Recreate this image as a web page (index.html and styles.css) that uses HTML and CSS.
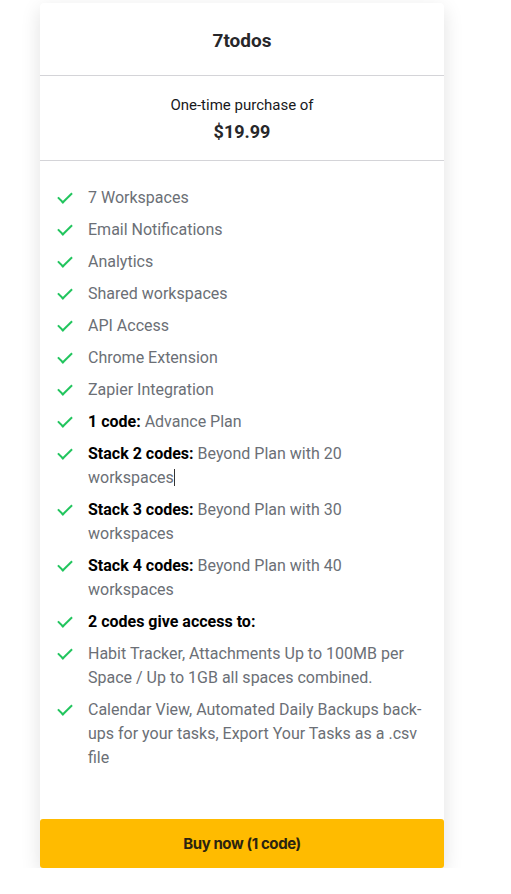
FILE: index.html
```html
<!DOCTYPE html>
<html lang="en">
<head>
  <meta charset="UTF-8" />
  <title>7todos</title>
  <link rel="stylesheet" href="styles.css">
</head>
<body>
  <div class="card">
    <div class="card-head">
      <h2>7todos</h2>
    </div>
    <div class="card-price">
      <p class="price-label">One-time purchase of</p>
      <p class="price">$19.99</p>
    </div>
    <ul class="features">
      <li>7 Workspaces</li>
      <li>Email Notifications</li>
      <li>Analytics</li>
      <li>Shared workspaces</li>
      <li>API Access</li>
      <li>Chrome Extension</li>
      <li>Zapier Integration</li>
      <li><b>1 code:</b> Advance Plan</li>
      <li><b>Stack 2 codes:</b> Beyond Plan with 20 workspaces<span class="caret"></span></li>
      <li><b>Stack 3 codes:</b> Beyond Plan with 30 workspaces</li>
      <li><b>Stack 4 codes:</b> Beyond Plan with 40 workspaces</li>
      <li><b>2 codes give access to:</b></li>
      <li>Habit Tracker, Attachments Up to 100MB per Space / Up to 1GB all spaces combined.</li>
      <li>Calendar View, Automated Daily Backups back-ups for your tasks, Export Your Tasks as a .csv file</li>
    </ul>
    <button class="buy">Buy now (1 code)</button>
  </div>
</body>
</html>
```

FILE: styles.css
```css
body {
  margin: 0;
  padding: 0;
  background: #fff;
  font-family: Roboto, 'Liberation Sans', sans-serif;
}

.card {
  width: 404px;
  margin: 3px 0 0 40px;
  background: #fff;
  box-shadow: 0 6px 20px rgba(0,0,0,0.12);
  border-radius: 4px;
}

.card-head {
  height: 72px;
  display: flex;
  align-items: center;
  justify-content: center;
  border-bottom: 1px solid #d4d4d8;
}

.card-head h2 {
  margin: 2px 0 0;
  font-size: 19px;
  font-weight: 700;
  color: #27272a;
}

.card-price {
  height: 85px;
  border-bottom: 1px solid #d4d4d8;
  text-align: center;
  padding-top: 1px;
  box-sizing: border-box;
}

.price-label {
  margin: 18px 0 0;
  font-size: 15px;
  line-height: 20px;
  color: #18181b;
}

.price {
  margin: 6px 0 0;
  font-size: 18px;
  line-height: 22px;
  font-weight: 700;
  color: #27272a;
}

.features {
  list-style: none;
  margin: 0;
  padding: 25px 14px 49px 48px;
  display: flex;
  flex-direction: column;
  gap: 8px;
}

.features li {
  position: relative;
  font-size: 16px;
  line-height: 24px;
  color: #6b6f76;
}

.features li b {
  color: #000;
  font-weight: 700;
}

.features li::before {
  content: '';
  position: absolute;
  left: -30px;
  top: 6px;
  width: 12px;
  height: 6px;
  border-left: 2px solid #22c55e;
  border-bottom: 2px solid #22c55e;
  transform: rotate(-45deg);
}

.caret {
  display: inline-block;
  width: 1px;
  height: 17px;
  background: #333;
  vertical-align: -3px;
}

.buy {
  display: block;
  width: 100%;
  height: 49px;
  border: none;
  border-radius: 3px;
  background: #ffbb00;
  color: #2b2410;
  font-family: Inter, Roboto, sans-serif;
  font-size: 15px;
  font-weight: 700;
  letter-spacing: -0.4px;
  cursor: pointer;
}
```
